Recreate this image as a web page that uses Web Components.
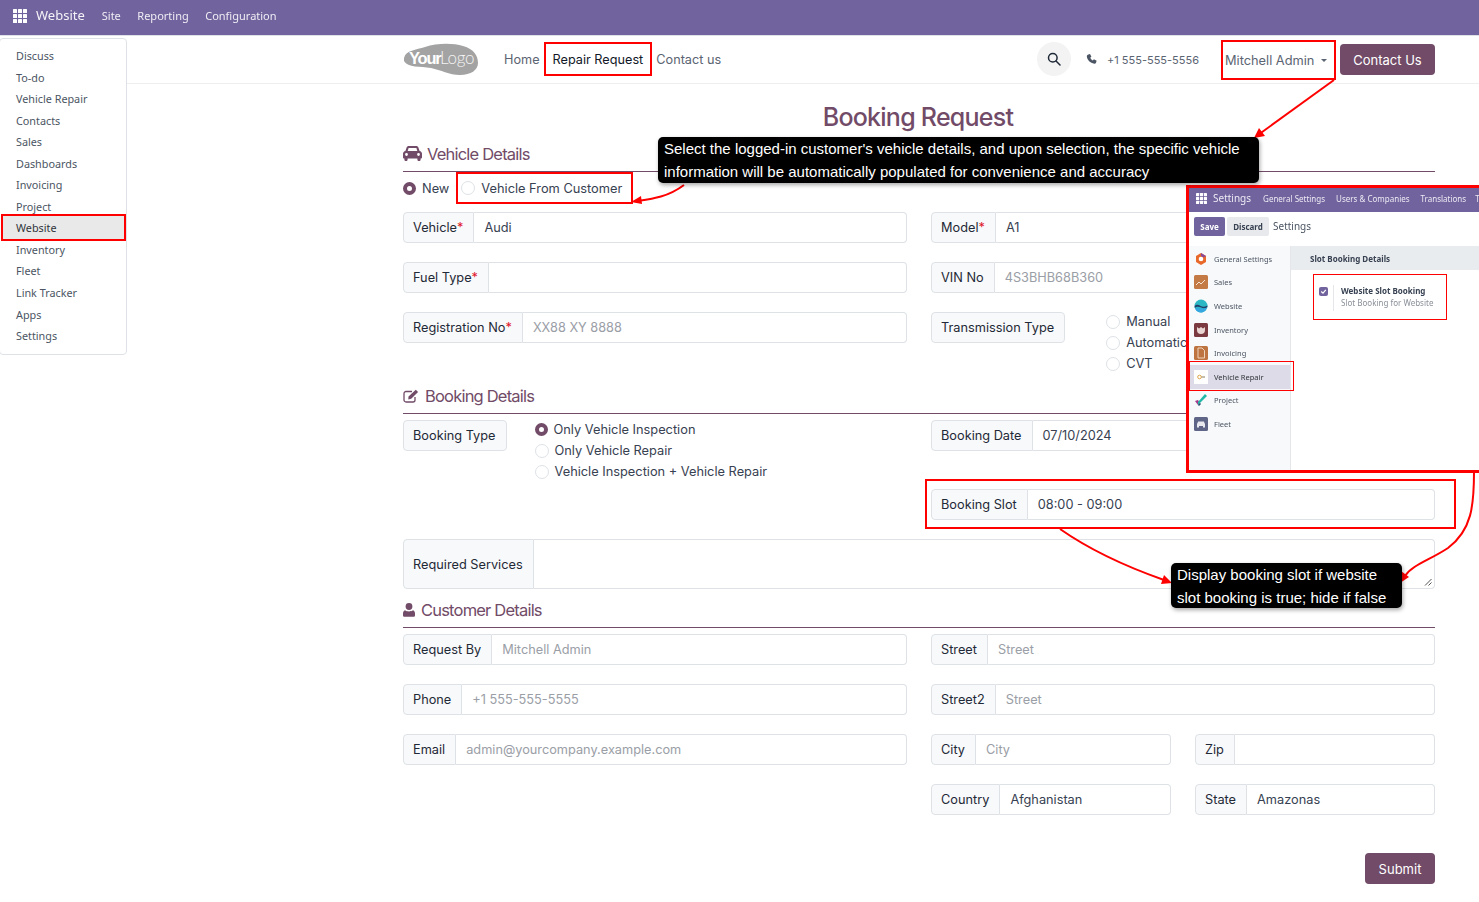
<!DOCTYPE html>
<html lang="en">
<head>
<meta charset="utf-8">
<title>Booking Request</title>
<style>
  html, body { margin: 0; padding: 0; background: #fff; }
  body { font-family: Inter, "Liberation Sans", sans-serif; color: #374151; overflow-x: hidden; }
  #page { position: relative; width: 1479px; height: 902px; overflow: hidden; }
</style>
</head>
<body>
<div id="page">
  <top-bar></top-bar>
  <site-header></site-header>
  <booking-form></booking-form>

  <apps-menu></apps-menu>
  <settings-shot></settings-shot>
  <arrow-layer></arrow-layer>
  <note-box style="left:658px;top:137px;height:46px;width:601px">Select the logged-in customer's vehicle details, and upon selection, the specific vehicle information will be automatically populated for convenience and accuracy</note-box>
  <note-box style="left:1171px;top:563px;width:231px">Display booking slot if website slot booking is true; hide if false</note-box>
</div>

<script>
const GRID_ICON = (fill, size) => {
    let rects = '';
    for (let y = 0; y < 3; y++) {
        for (let x = 0; x < 3; x++) {
            rects += `<rect x="${x * 5}" y="${y * 5}" width="4" height="4" rx=".5"/>`;
        }
    }
    return `<svg width="${size}" height="${size}" viewBox="0 0 14 14" fill="${fill}">${rects}</svg>`;
};

class TopBar extends HTMLElement {
    constructor() {
        super();
        this.attachShadow({ mode: 'open' });
        this.shadowRoot.innerHTML = `
        <style>
            :host { display: flex; align-items: center; height: 35px; background: #71639e; color: #fff;
                    font-family: "Noto Sans", sans-serif; font-size: 11px; box-sizing: border-box; padding: 0 0 5px 13px; }
            svg { display: block; margin: 2px 9px 0 0; flex: none; }
            .brand { font-size: 13px; margin-right: 17px; opacity: .92; }
            a { margin-right: 16.500px; opacity: .88; }
        </style>
        ${GRID_ICON('#fff', 14)}
        <span class="brand">Website</span>
        <a>Site</a><a>Reporting</a><a>Configuration</a>`;
    }
}
customElements.define('top-bar', TopBar);

class SiteHeader extends HTMLElement {
    constructor() {
        super();
        this.attachShadow({ mode: 'open' });
        this.shadowRoot.innerHTML = `
        <style>
            :host { display: flex; align-items: center; height: 49px; box-sizing: border-box; border-top: 1px solid #dee2e6;
                    border-bottom: 1px solid #eeeeee; padding: 0 44px 0 403px; font-size: 12.700px; color: #5b6472; }
            .logo { display: block; margin-right: 26px; }
            .logo text { font-family: "Liberation Sans", sans-serif; }
            nav { display: flex; align-items: center; margin-top: -2px; }
            nav a { display: block; height: 34px; line-height: 35px; }
            nav a.home { margin-right: 4px; }
            nav a.on { color: #111827; border: 2px solid #f00; padding: 0 7px; height: 30px; line-height: 31px; margin-right: 4px; }
            .right { margin-left: auto; display: flex; align-items: center; }
            .search { width: 34px; height: 34px; border-radius: 50%; background: #f3f3f3; display: flex; align-items: center; justify-content: center; margin-right: 15px; margin-top: -1px; }
            .phone { display: flex; align-items: center; gap: 10px; font-size: 11px; margin-right: 22px; }
            .user { box-sizing: border-box; height: 40px; width: 115px; border: 2px solid #f00; display: flex; align-items: center; padding: 1px 0 0 2px; margin-right: 4px; white-space: nowrap; font-size: 12.800px; }
            .caret { display: inline-block; margin-left: 7px; border-top: 3.500px solid #5b6472; border-left: 3.500px solid transparent; border-right: 3.500px solid transparent; }
            .cta { background: #714b67; color: #fff; border-radius: 4px; width: 95px; height: 31px; display: flex; align-items: center; justify-content: center; font-size: 13px; }
        </style>
        <svg class="logo" width="75" height="34" viewBox="0 0 75 34">
            <path d="M1 15C3 7 13 7 22 4C34 0 50 0 60 3C71 6 75 13 75 20C75 27 68 32 57 32C46 32 38 27 28 25C17 23 5 25 1 18Z" fill="#a3a3a3"/>
            <text x="6" y="21" font-size="16.500" font-weight="700" fill="#fff" letter-spacing="-1.200">Your</text>
            <text x="37" y="21" font-size="17" style="font-family:Lato,sans-serif;font-weight:300" fill="#f4f4f4" letter-spacing="-.300">Logo</text>
        </svg>
        <nav>
            <a class="home">Home</a>
            <a class="on">Repair Request</a>
            <a>Contact us</a>
        </nav>
        <div class="right">
            <span class="search">
                <svg width="14" height="14" viewBox="0 0 14 14" fill="none" stroke="#1f2937" stroke-width="1.500"><circle cx="5.800" cy="5.800" r="4.300"/><path d="M9 9l4 4" stroke-linecap="round"/></svg>
            </span>
            <span class="phone">
                <svg width="11" height="11" viewBox="0 0 12 12" fill="#4b5563"><path d="M2.600.6 4.400 0l1.500 3-1.300 1.100c.5 1.300 1.500 2.400 2.900 3l1.100-1.300 3 1.500-.6 1.900c-.2.9-1 1.400-1.900 1.300C4.600 10 1.300 6.600.9 2.500.9 1.600 1.600.9 2.600.6z"/></svg>
                <span>+1 555-555-5556</span>
            </span>
            <span class="user">Mitchell Admin<i class="caret"></i></span>
            <span class="cta">Contact Us</span>
        </div>`;
    }
}
customElements.define('site-header', SiteHeader);

class FormField extends HTMLElement {
    constructor() {
        super();
        let req = this.hasAttribute('required') ? '<b>*</b>' : '';
        this.attachShadow({ mode: 'open' });
        this.shadowRoot.innerHTML = `
        <style>
            :host { display: flex; height: 31px; font-size: 12.750px; color: #374151; min-width: 0; }
            .lbl { display: flex; align-items: center; padding: 0 10px 0 9px; background: #f8f9fa; border: 1px solid #dee2e6; border-radius: 4px 0 0 4px; white-space: nowrap; color: #1f2937; box-sizing: border-box; }
            .lbl b { color: #e0162b; font-weight: 400; }
            .val { flex: 1; display: flex; align-items: center; padding: 0 10px; border: 1px solid #dee2e6; border-left: 0; border-radius: 0 4px 4px 0; white-space: nowrap; overflow: hidden; box-sizing: border-box; min-width: 0; }
            :host([ph]) .val { color: #9a9ea6; }
            :host([tall]) { height: 50px; }
            :host([solo]) .lbl { border-radius: 4px; }
            :host([solo]) .val { display: none; }
            .grip { position: absolute; right: 2px; bottom: 2px; }
            :host([tall]) .val { position: relative; }
        </style>
        <span class="lbl">${this.getAttribute('label')}${req}</span>
        <span class="val"><slot></slot>${this.hasAttribute('tall') ? '<svg class="grip" width="8" height="8" viewBox="0 0 8 8" stroke="#555" fill="none"><path d="M1 7.500 7.500 1M4.500 7.500l3-3"/></svg>' : ''}</span>`;
    }
}
customElements.define('form-field', FormField);

class RadioOption extends HTMLElement {
    constructor() {
        super();
        this.attachShadow({ mode: 'open' });
        this.shadowRoot.innerHTML = `
        <style>
            :host { display: flex; align-items: center; height: 21px; font-size: 12.800px; color: #374151; white-space: nowrap; }
            i { width: 12px; height: 12px; border-radius: 50%; border: 1px solid #dee2e6; margin-right: 6px; flex: none; background: #fff; box-sizing: content-box; }
            :host([checked]) i { border: 4px solid #714b67; width: 5px; height: 5px; }
        </style>
        <i></i><slot></slot>`;
    }
}
customElements.define('radio-option', RadioOption);

class SectionTitle extends HTMLElement {
    constructor() {
        super();
        const icons = {
            car: '<svg width="19" height="15" viewBox="0 0 19 15" fill="#714b67"><path d="M3.600 1.600C3.900.7 4.700 0 5.700 0h7.600c1 0 1.800.7 2.100 1.600L16.600 5c1.300.3 2.400 1.400 2.400 2.800v3.700c0 .5-.4.9-.9.9h-.5v1c0 .9-.7 1.600-1.600 1.600s-1.600-.7-1.600-1.600v-1H4.600v1c0 .9-.7 1.600-1.600 1.600s-1.600-.7-1.600-1.600v-1H.9c-.5 0-.9-.4-.9-.9V7.800C0 6.400 1.100 5.300 2.400 5zM5.600 2 4.700 5h9.600l-.9-3zM3.500 9.900a1.400 1.400 0 1 0 0-2.800 1.400 1.400 0 0 0 0 2.800zm12 0a1.400 1.400 0 1 0 0-2.800 1.400 1.400 0 0 0 0 2.800z"/></svg>',
            edit: '<svg width="16" height="14" viewBox="0 0 16 14"><path d="M12 8v3a2 2 0 0 1-2 2H3a2 2 0 0 1-2-2V4.500a2 2 0 0 1 2-2h6" fill="none" stroke="#714b67" stroke-width="1.300"/><path d="M5.500 7.500 12.800.7l2.300 2.200-6.900 6.900-2.900.6z" fill="#714b67"/></svg>',
            user: '<svg width="12" height="14" viewBox="0 0 12 14" fill="#714b67"><circle cx="6" cy="3.500" r="3.400"/><path d="M2 7.200C3 8 4.400 8.400 6 8.400s3-.4 4-1.200c1.300.4 2 1.800 2 3.400v1.600c0 .9-.7 1.600-1.600 1.600H1.600C.7 13.800 0 13.100 0 12.200v-1.600c0-1.600.7-3 2-3.400z"/></svg>'
        };
        this.attachShadow({ mode: 'open' });
        this.shadowRoot.innerHTML = `
        <style>
            :host { display: flex; align-items: center; gap: 6px; box-sizing: border-box; border-bottom: 1px solid #714b67; font-size: 16.500px; color: #714b67; letter-spacing: -.800px; padding-bottom: 6px; height: 30px; }
            :host([icon=car]) { gap: 5px; }
            svg { display: block; flex: none; }
        </style>
        ${icons[this.getAttribute('icon')]}<slot></slot>`;
    }
}
customElements.define('section-title', SectionTitle);

class BookingForm extends HTMLElement {
    constructor() {
        super();
        this.attachShadow({ mode: 'open' });
        this.shadowRoot.innerHTML = `
        <style>
            :host { display: block; padding: 0 44px 0 403px; }
            h1 { margin: 0; padding: 18px 2px 0 0; height: 34px; font-size: 25px; line-height: 30px; font-weight: 500; color: #714b67; text-align: center; letter-spacing: -.750px; }
            .grid { display: grid; grid-template-columns: 1fr 1fr; column-gap: 24px; row-gap: 19px; margin-top: 6px; }
            .choice { display: flex; align-items: center; height: 32px; margin-bottom: 8px; position: relative; }
            .picked { box-sizing: border-box; height: 32px; width: 177px; margin-left: 7px; padding-left: 3px; border: 2px solid #f00; display: flex; align-items: center; }
            .pair { display: flex; align-items: flex-start; }
            .pair .opts { display: flex; flex-direction: column; flex: none; margin-top: -1px; }
            .pair form-field { flex: none; }
            .two { display: grid; grid-template-columns: 1fr 1fr; column-gap: 24px; }
            .slotwrap { position: relative; }
            .slotmark { position: absolute; left: -6px; right: -21px; top: -10px; bottom: -9px; border: 2px solid #f00; }
            .submit { display: flex; justify-content: flex-end; margin-top: 38px; }
            .submit span { background: #714b67; color: #fff; font-size: 13px; border-radius: 4px; width: 70px; height: 31px; display: flex; align-items: center; justify-content: center; }
            .slots { grid-template-rows: 31px 31px; row-gap: 38px; }
            .slots .pair { grid-row: 1 / 3; }
        </style>
        <h1>Booking Request</h1>

        <section-title icon="car" style="margin-top:6px">Vehicle Details</section-title>
        <div class="choice">
            <radio-option checked>New</radio-option>
            <div class="picked"><radio-option>Vehicle From Customer</radio-option></div>
        </div>
        <div class="grid" style="margin-top:0">
            <form-field label="Vehicle" required>Audi</form-field>
            <form-field label="Model" required>A1</form-field>
            <form-field label="Fuel Type" required></form-field>
            <form-field label="VIN No" ph>4S3BHB68B360</form-field>
            <form-field label="Registration No" required ph>XX88 XY 8888</form-field>
            <div class="pair" style="height:31px">
                <form-field label="Transmission Type" solo></form-field>
                <div class="opts" style="margin-left:41px">
                    <radio-option>Manual</radio-option>
                    <radio-option>Automatic</radio-option>
                    <radio-option>CVT</radio-option>
                </div>
            </div>
        </div>

        <section-title icon="edit" style="margin-top:41px">Booking Details</section-title>
        <div class="grid slots">
            <div class="pair">
                <form-field label="Booking Type" solo></form-field>
                <div class="opts" style="margin-left:28px">
                    <radio-option checked>Only Vehicle Inspection</radio-option>
                    <radio-option>Only Vehicle Repair</radio-option>
                    <radio-option>Vehicle Inspection + Vehicle Repair</radio-option>
                </div>
            </div>
            <form-field label="Booking Date">07/10/2024</form-field>
            <div class="slotwrap"><form-field label="Booking Slot">08:00 - 09:00</form-field><div class="slotmark"></div></div>
        </div>
        <form-field tall label="Required Services" style="margin-top:19px"></form-field>

        <section-title icon="user" style="margin-top:9px">Customer Details</section-title>
        <div class="grid">
            <form-field label="Request By" ph>Mitchell Admin</form-field>
            <form-field label="Street" ph>Street</form-field>
            <form-field label="Phone" ph>+1 555-555-5555</form-field>
            <form-field label="Street2" ph>Street</form-field>
            <form-field label="Email" ph>admin@yourcompany.example.com</form-field>
            <div class="two">
                <form-field label="City" ph>City</form-field>
                <form-field label="Zip"></form-field>
            </div>
            <div></div>
            <div class="two">
                <form-field label="Country">Afghanistan</form-field>
                <form-field label="State">Amazonas</form-field>
            </div>
        </div>
        <div class="submit"><span>Submit</span></div>`;
    }
}
customElements.define('booking-form', BookingForm);

class AppsMenu extends HTMLElement {
    constructor() {
        super();
        const names = ['Discuss', 'To-do', 'Vehicle Repair', 'Contacts', 'Sales', 'Dashboards', 'Invoicing', 'Project', 'Website', 'Inventory', 'Fleet', 'Link Tracker', 'Apps', 'Settings'];
        this.attachShadow({ mode: 'open' });
        this.shadowRoot.innerHTML = `
        <style>
            :host { position: absolute; left: -1px; top: 38px; width: 128px; height: 317px; box-sizing: border-box; background: #fff; border: 1px solid #dee2e6; border-radius: 4px; padding-top: 6px;
                    font-family: "Noto Sans", sans-serif; font-size: 10.800px; color: #4b5563; z-index: 3; }
            div { height: 21.550px; line-height: 21.550px; padding-left: 16px; white-space: nowrap; }
            div.on { background: #e9e9e9; color: #30343a; box-shadow: inset 0 0 0 2px #f00; margin: -3.500px 0 -2px 1px; padding-left: 15px; width: 125px; box-sizing: border-box; height: 27px; line-height: 27px; }
        </style>
        ${names.map(n => `<div class="${n === 'Website' ? 'on' : ''}">${n}</div>`).join('')}`;
    }
}
customElements.define('apps-menu', AppsMenu);

class SettingsShot extends HTMLElement {
    constructor() {
        super();
        const apps = [
            ['General Settings', '<svg width="14" height="14" viewBox="0 0 14 14"><path d="M7 1l5 3v6l-5 3-5-3V4z" fill="#e8692a"/><path d="M7 1l5 3-2.500 1.500L7 4z" fill="#8a4a9a"/><circle cx="7" cy="7" r="2.300" fill="#fff"/></svg>'],
            ['Sales', '<svg width="14" height="14" viewBox="0 0 14 14"><rect width="14" height="14" rx="1.500" fill="#c47a45"/><path d="M2 10l3-3 2 2 4-4" fill="none" stroke="#f6e2d2" stroke-width="1"/></svg>'],
            ['Website', '<svg width="14" height="14" viewBox="0 0 14 14"><circle cx="7" cy="7" r="6.500" fill="#2bb7c4"/><path d="M.6 7c2-2 4-1 6 0s4 1 6.800-.5V8c-2 2-5 1-7 .2S2 7.500.8 9z" fill="#22406b"/><path d="M1 9.500c3-1.500 8 1.500 12-1C12.500 11 10 13.500 7 13.500 4.500 13.500 2 12 1 9.500z" fill="#34a7e0"/></svg>'],
            ['Inventory', '<svg width="14" height="14" viewBox="0 0 14 14"><rect width="14" height="14" rx="1.500" fill="#7a3a3f"/><path d="M3 4l2 1.500L7 4l2 1.500L11 4v3a4 4 0 0 1-8 0z" fill="#e9d6d3"/></svg>'],
            ['Invoicing', '<svg width="14" height="14" viewBox="0 0 14 14"><rect width="14" height="14" rx="1.500" fill="#bd7440"/><path d="M4 2h4l2.500 2.500V12H4z" fill="none" stroke="#f5dfcc" stroke-width=".9"/></svg>'],
            ['Vehicle Repair', '<svg width="14" height="14" viewBox="0 0 14 14"><rect width="14" height="14" fill="#fff"/><circle cx="5.500" cy="7" r="1.800" fill="none" stroke="#dfa648" stroke-width="1"/><path d="M7.500 7h3.500" stroke="#8a7a5a" stroke-width="1"/></svg>'],
            ['Project', '<svg width="14" height="14" viewBox="0 0 14 14"><path d="M1 8l3 4 2-2-2-3z" fill="#a23b8c"/><path d="M4 12 13 3l-2-2-7 8z" fill="#22b8a8"/><path d="M4 12l2-2 1 1-2 2z" fill="#244a6b"/></svg>'],
            ['Fleet', '<svg width="14" height="14" viewBox="0 0 14 14"><rect width="14" height="14" rx="1.500" fill="#5f6587"/><path d="M3 9V7l1.200-2.500h5.600L11 7v2z" fill="#e8e9ef"/><rect x="3" y="9" width="2" height="1.500" fill="#e8e9ef"/><rect x="9" y="9" width="2" height="1.500" fill="#e8e9ef"/></svg>']
        ];
        this.attachShadow({ mode: 'open' });
        this.shadowRoot.innerHTML = `
        <style>
            :host { position: absolute; left: 1186px; top: 185px; width: 293px; height: 288px; box-sizing: border-box; border: 3px solid #f00; border-right: 0; background: #fff; overflow: hidden; z-index: 2;
                    font-family: "Noto Sans", sans-serif; color: #4b5563; }
            .wrap { filter: blur(.35px); display: flex; flex-direction: column; height: 100%; }
            .bar { flex: none; height: 24px; background: #71639e; color: #eceaf3; display: flex; align-items: center; padding: 0 0 4px 7px; box-sizing: border-box; font-size: 8px; white-space: nowrap; }
            .bar svg { margin-right: 6px; flex: none; }
            .bar .brand { font-size: 10px; margin-right: 12px; }
            .bar a { margin-right: 11px; }
            .bar a:nth-last-child(2) { margin-right: 9px; }
            .ctl { flex: none; height: 34px; display: flex; align-items: center; padding: 0 0 6px 5px; gap: 2px; box-sizing: border-box; }
            .ctl span { height: 19px; display: flex; align-items: center; justify-content: center; border-radius: 2px; font-size: 8px; font-weight: 700; }
            .save { width: 31px; background: #71639e; color: #fff; }
            .discard { width: 42px; background: #e7e9ed; color: #374151; }
            .ctl em { font-style: normal; font-size: 10px; margin-left: 2px; }
            .body { flex: 1; display: flex; min-height: 0; }
            aside { width: 102px; flex: none; background: #f8f9fa; border-right: 1px solid #e4e6ea; padding-top: 1px; box-sizing: border-box; }
            aside div { height: 23.600px; display: flex; align-items: center; padding-left: 5px; gap: 6px; font-size: 7.500px; box-sizing: border-box; }
            aside svg { flex: none; }
            aside div.on { background: #dcdbe7; color: #30343a; }
            .band { height: 24px; background: #e9ecef; display: flex; align-items: center; padding-left: 19px; font-size: 8px; font-weight: 700; color: #374151; }
            .main { flex: 1; }
            .opt { margin: 4px 0 0 22px; width: 134px; height: 46px; box-sizing: border-box; border: 1px solid #f00; display: flex; align-items: flex-start; padding: 10px 0 0 5px; font-size: 8px; line-height: 12px; }
            .chk { width: 9px; height: 9px; border-radius: 2px; background: #71639e; color: #fff; display: flex; align-items: center; justify-content: center; margin: 2px 5px 0 0; flex: none; }
            .txt { border-left: 1px solid #e4e6ea; padding-left: 7px; height: 26px; }
            .txt b { display: block; color: #374151; }
            .txt span { color: #8a9099; }
            .mark { position: absolute; left: 0; top: 173px; width: 105px; height: 30px; box-sizing: border-box; border: 1px solid #f00; }
        </style>
        <div class="wrap">
            <div class="bar">${GRID_ICON('#fff', 11)}<span class="brand">Settings</span><a>General Settings</a><a>Users &amp; Companies</a><a>Translations</a><a>T</a></div>
            <div class="ctl"><span class="save">Save</span><span class="discard">Discard</span><em>Settings</em></div>
            <div class="body">
                <aside>${apps.map(a => `<div class="${a[0] === 'Vehicle Repair' ? 'on' : ''}">${a[1]}<span>${a[0]}</span></div>`).join('')}</aside>
                <div class="main">
                    <div class="band">Slot Booking Details</div>
                    <div class="opt">
                        <span class="chk"><svg width="7" height="7" viewBox="0 0 7 7" fill="none" stroke="#fff" stroke-width="1.200"><path d="M1.200 3.500 3 5.200 5.800 1.800"/></svg></span>
                        <div class="txt"><b>Website Slot Booking</b><span>Slot Booking for Website</span></div>
                    </div>
                </div>
            </div>
        </div>
        <div class="mark"></div>`;
    }
}
customElements.define('settings-shot', SettingsShot);

class NoteBox extends HTMLElement {
    constructor() {
        super();
        this.attachShadow({ mode: 'open' });
        this.shadowRoot.innerHTML = `
        <style>
            :host { position: absolute; box-sizing: border-box; background: #000; color: #fff; border-radius: 5px; padding: 0 6px; height: 45px;
                    font-family: "Liberation Sans", Arial, sans-serif; font-size: 15px; line-height: 23px; box-shadow: 1px 2px 4px rgba(0,0,0,.35); z-index: 5; }
        </style>
        <slot></slot>`;
    }
}
customElements.define('note-box', NoteBox);

class ArrowLayer extends HTMLElement {
    constructor() {
        super();
        this.attachShadow({ mode: 'open' });
        this.shadowRoot.innerHTML = `
        <style>
            :host { position: absolute; left: 0; top: 0; width: 1479px; height: 902px; z-index: 4; pointer-events: none; }
            svg { display: block; }
            path { fill: none; stroke: #f00; stroke-width: 2; }
            polygon { fill: #f00; }
        </style>
        <svg width="1479" height="902" viewBox="0 0 1479 902">
            <path d="M1334 80 1258 135"/>
            <polygon points="1254,138 1259,128 1265,136"/>
            <path d="M684 185C668 197 652 199 638 201"/>
            <polygon points="631,202 641,196 642,204"/>
            <path d="M1060 529C1090 550 1130 568 1164 580"/>
            <polygon points="1172,583 1161,584 1164,575"/>
            <path d="M1474 472C1474 505 1472 530 1448 548C1430 560 1412 565 1405 576"/>
            <polygon points="1400,583 1401,571 1409,577"/>
        </svg>`;
    }
}
customElements.define('arrow-layer', ArrowLayer);
</script>
</body>
</html>
